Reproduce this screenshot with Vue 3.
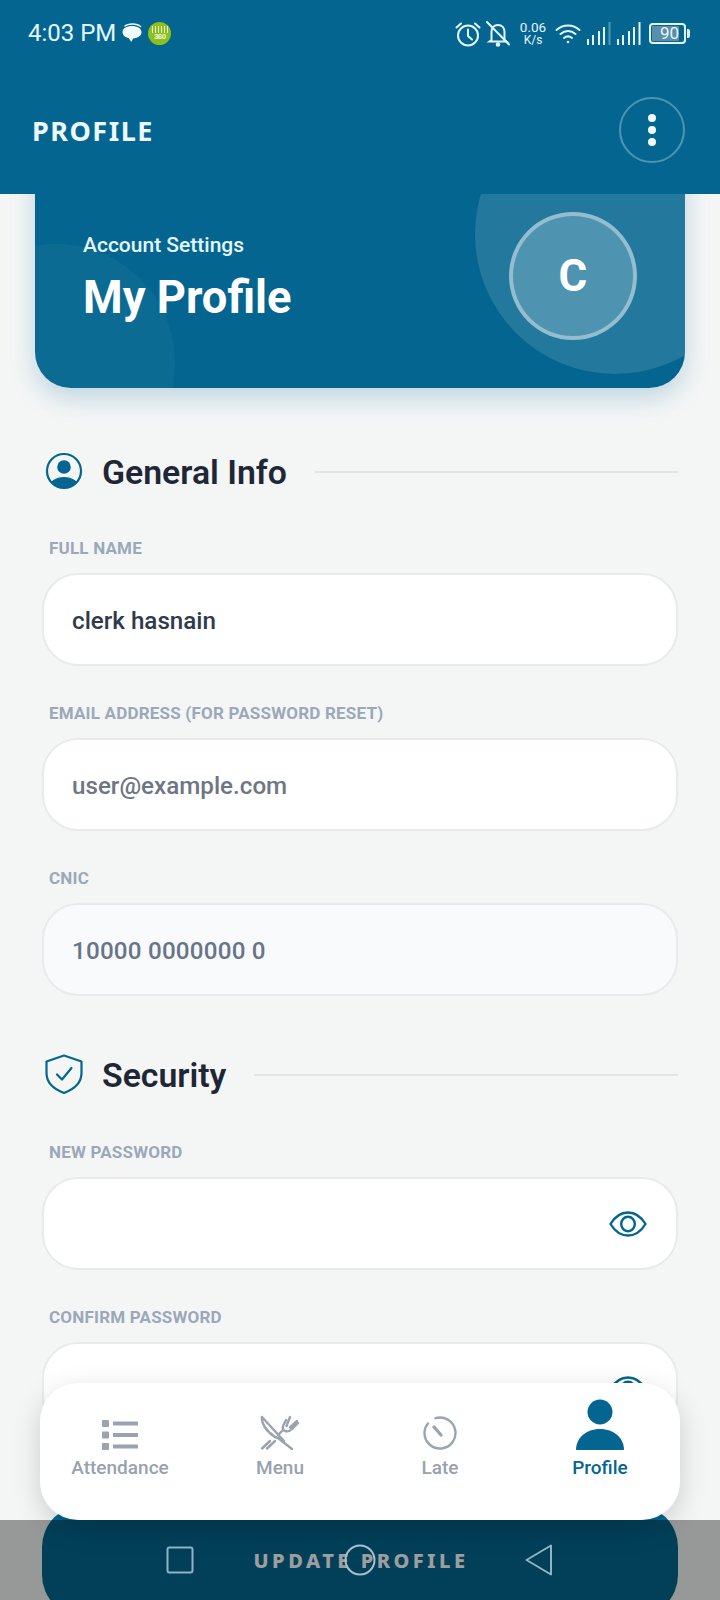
<script setup>
const fields1 = [
  { label: 'FULL NAME', value: 'clerk hasnain', kind: 'filled' },
  { label: 'EMAIL ADDRESS (FOR PASSWORD RESET)', value: 'user@example.com', kind: 'hint' },
  { label: 'CNIC', value: '10000 0000000 0', kind: 'locked' }
]
const fields2 = [
  { label: 'NEW PASSWORD' },
  { label: 'CONFIRM PASSWORD' }
]
</script>

<template>
  <div class="screen">
    <header class="top">
      <div class="status">
        <div class="status-left">
          <span class="clock">4:03 PM</span>
          <svg class="bubble" width="22" height="20" viewBox="0 0 21 20">
            <path d="M10.500 3C5 3 1 5.500 1 9s3 5.500 6 6l3 4 1.500-3.600C16.500 15 20 12.800 20 9.200 20 5.500 16 3 10.500 3z" fill="#f2fbff"/>
            <path d="M3 3.500C5 1.500 8 1 11 1c3.500 0 6.500 .8 8.500 3" fill="none" stroke="#f2fbff" stroke-width="1.300"/>
          </svg>
          <span class="green">
            <span class="green-lines"></span>
            <span class="green-num">360</span>
          </span>
        </div>
        <div class="status-right">
          <svg class="alarm" width="26" height="26" viewBox="0 0 26 26" fill="none" stroke="#e4f6fd" stroke-width="2">
            <circle cx="13" cy="14.500" r="10"/>
            <path d="M13 8.500v6.500l4 3.500M1.500 6.500 6 2.500M24.500 6.500 20 2.500" stroke-linecap="round"/>
          </svg>
          <svg class="bell" width="24" height="26" viewBox="0 0 24 26" fill="none" stroke="#e4f6fd" stroke-width="2">
            <path d="M5.500 19V11c0-4 2.500-7 6.500-7s6.500 3 6.500 7v8l2 1.500H3.500z"/>
            <path d="M1 1l22 22.500" stroke-linecap="round"/>
            <circle cx="12" cy="23.500" r="1.300" fill="#e4f6fd"/>
          </svg>
          <div class="speed"><span>0.06</span><span class="unit">K/s</span></div>
          <svg class="wifi" width="26" height="22" viewBox="0 0 26 22" fill="none" stroke="#e4f6fd" stroke-width="2" stroke-linecap="round">
            <path d="M1.500 7C8 1 18 1 24.500 7M5.500 11c4.500-4 10.500-4 15 0M9 15c2.500-2 5.500-2 8 0"/>
            <circle cx="13" cy="19" r="1.300" fill="#e4f6fd" stroke="none"/>
          </svg>
          <svg class="bars-a" width="25" height="23" viewBox="0 0 25 23" fill="#e4f6fd">
            <rect x="0" y="17" width="2" height="6"/><rect x="5" y="13" width="2" height="10"/>
            <rect x="11" y="9" width="2" height="14"/><rect x="16" y="5" width="2" height="18"/>
            <rect x="21.500" y="0" width="2" height="23" opacity=".35"/>
          </svg>
          <svg class="bars-b" width="25" height="23" viewBox="0 0 25 23" fill="#e4f6fd">
            <rect x="0" y="17" width="2" height="6"/><rect x="5" y="13" width="2" height="10"/>
            <rect x="11" y="9" width="2" height="14"/><rect x="16" y="5" width="2" height="18"/>
            <rect x="21.500" y="0" width="2" height="23"/>
          </svg>
          <div class="battery">
            <span class="battery-body"><span class="battery-num">90</span></span>
            <span class="battery-tip"></span>
          </div>
        </div>
      </div>
      <div class="bar">
        <h1 class="bar-title">PROFILE</h1>
        <button class="more"><i></i><i></i><i></i></button>
      </div>
    </header>

    <section class="hero">
      <span class="blob-right"></span>
      <span class="blob-left"></span>
      <div class="hero-text">
        <p class="hero-sub">Account Settings</p>
        <h2 class="hero-title">My Profile</h2>
      </div>
      <div class="avatar">C</div>
    </section>

    <main class="form">
      <div class="section-head">
        <svg class="section-icon" width="40" height="40" viewBox="0 0 40 40">
          <defs>
            <clipPath id="ring"><circle cx="20" cy="20" r="17"/></clipPath>
          </defs>
          <circle cx="20" cy="16" r="6.800" fill="#046690"/>
          <g clip-path="url(#ring)"><ellipse cx="20" cy="36" rx="15" ry="10" fill="#046690"/></g>
          <circle cx="20" cy="20" r="17" fill="none" stroke="#046690" stroke-width="2.200"/>
        </svg>
        <h3 class="section-title">General Info</h3>
        <span class="rule"></span>
      </div>
      <div v-for="f in fields1" :key="f.label" class="field">
        <label class="field-label">{{ f.label }}</label>
        <div class="input" :class="f.kind">{{ f.value }}</div>
      </div>

      <div class="section-head security">
        <svg class="section-icon" width="40" height="40" viewBox="0 0 40 40" fill="none" stroke="#046690" stroke-width="2.200" stroke-linejoin="round" stroke-linecap="round">
          <path d="M20 1.500 37.500 7.500V19c0 9-7 16-17.500 20C9.500 35 2.500 28 2.500 19V7.500z"/>
          <path d="M13 20.500l5 5 9.500-11.500"/>
        </svg>
        <h3 class="section-title">Security</h3>
        <span class="rule"></span>
      </div>
      <div v-for="f in fields2" :key="f.label" class="field">
        <label class="field-label">{{ f.label }}</label>
        <div class="input pass">
          <svg width="38" height="26" viewBox="0 0 38 26" fill="none" stroke="#046690" stroke-width="2.400">
            <path d="M1.500 13C6 5.500 12 1.500 19 1.500S32 5.500 36.500 13C32 20.500 26 24.500 19 24.500S6 20.500 1.500 13z" stroke-linejoin="round"/>
            <ellipse cx="19" cy="13" rx="6.800" ry="7.200"/>
          </svg>
        </div>
      </div>
    </main>

    <button class="update">UPDATE PROFILE</button>

    <nav class="tabs">
      <div class="tab">
        <span class="tab-icon">
          <svg width="36" height="30" viewBox="0 0 36 30" fill="#9aa3b0">
            <rect x="0" y="0" width="7" height="7" rx="1"/><rect x="11" y="1.500" width="25" height="4"/>
            <rect x="0" y="11.500" width="7" height="7" rx="1"/><rect x="11" y="13" width="25" height="4"/>
            <rect x="0" y="23" width="7" height="7" rx="1"/><rect x="11" y="24.500" width="25" height="4"/>
          </svg>
        </span>
        <span class="tab-label">Attendance</span>
      </div>
      <div class="tab">
        <span class="tab-icon">
          <svg width="40" height="36" viewBox="0 0 40 36" fill="none" stroke="#9aa3b0" stroke-width="2.400" stroke-linecap="round" stroke-linejoin="round">
            <path d="M2 3C1 9 6 17 15 23l3 1 14 11M2 3l22 24"/>
            <path d="M2 34.500l8-7.500M7 34.500l8-7.500M18 21l5-5"/>
            <path d="M26 6l-2.500 5c-1.500 3-.5 5 1.500 6 3 1 5 0 7-2l6-6M30 3l-3.500 9M37 7l-7 6.500"/>
          </svg>
        </span>
        <span class="tab-label">Menu</span>
      </div>
      <div class="tab">
        <span class="tab-icon">
          <svg width="34" height="34" viewBox="0 0 34 34" fill="none" stroke="#9aa3b0" stroke-width="2.400" stroke-linecap="round">
            <path d="M5 7.500C2.800 10 1.500 13.400 1.500 17a15.500 15.500 0 1 0 11-14.800"/>
            <path d="M11 11l7 8" stroke-width="3.400"/>
          </svg>
        </span>
        <span class="tab-label">Late</span>
      </div>
      <div class="tab active">
        <span class="tab-icon">
          <svg width="50" height="51" viewBox="0 0 50 51" fill="#046690">
            <circle cx="25" cy="13" r="12.500"/>
            <path d="M1 51C1 39 11 30 25 30s24 9 24 21z"/>
          </svg>
        </span>
        <span class="tab-label">Profile</span>
      </div>
    </nav>

    <div class="sysnav">
      <svg width="28" height="28" viewBox="0 0 28 28" fill="none" stroke="#8fb4c6" stroke-width="2">
        <rect x="1.500" y="1.500" width="25" height="25" rx="2"/>
      </svg>
      <svg width="32" height="32" viewBox="0 0 32 32" fill="none" stroke="#a9c0cb" stroke-width="2">
        <circle cx="16" cy="16" r="14.500"/>
      </svg>
      <svg width="28" height="32" viewBox="0 0 28 32" fill="none" stroke="#8fb4c6" stroke-width="2" stroke-linejoin="round">
        <path d="M26 1.500V30.500L1.500 16z"/>
      </svg>
    </div>
  </div>
</template>

<style>
html, body { margin: 0; background: #f4f6f6; }
</style>

<style scoped>
.screen {
  position: relative;
  width: 720px;
  height: 1600px;
  overflow: hidden;
  background: #f4f6f6;
  font-family: Roboto, sans-serif;
}
.top {
  position: relative;
  z-index: 2;
  height: 194px;
  background: #046690;
  color: #eef9fe;
}
.status {
  height: 66px;
  padding: 0 30px 0 28px;
  display: flex;
  align-items: center;
  justify-content: space-between;
  box-sizing: border-box;
}
.status-left { display: flex; align-items: center; }
.clock { font-size: 24px; margin-right: 5px; color: #e4f6fd; }
.bubble { margin-right: 5px; }
.green {
  width: 23px;
  height: 23px;
  border-radius: 50%;
  background: #8cbf1f;
  display: flex;
  flex-direction: column;
  align-items: center;
  overflow: hidden;
}
.green-lines {
  width: 16px;
  height: 7px;
  margin-top: 4px;
  background: repeating-linear-gradient(90deg, #e8f5c8 0 1px, transparent 1px 3px);
}
.green-num {
  font: 700 8px/8px "Liberation Sans", sans-serif;
  letter-spacing: -0.5px;
  color: #f2fadf;
}
.status-right { display: flex; align-items: center; color: #e4f6fd; margin-top: 1px; }
.alarm { margin-right: 5px; }
.bell { margin-right: 7px; }
.speed {
  display: flex;
  flex-direction: column;
  align-items: center;
  font-size: 13.500px;
  line-height: 14px;
  width: 32px;
  margin-right: 6px;
}
.unit { font-size: 12px; line-height: 13px; }
.bars-a { margin-left: 6px; }
.bars-b { margin-left: 5px; }
.battery { display: flex; align-items: center; margin-left: 7px; }
.battery-body {
  width: 37px;
  height: 21px;
  box-sizing: border-box;
  border: 2px solid #e4f6fd;
  border-radius: 4px;
  padding: 1px;
  display: flex;
}
.battery-num {
  flex: 0 0 80%;
  background: #5a8eab;
  border-radius: 1px;
  font-size: 17px;
  line-height: 15px;
  text-align: center;
  text-indent: 8px;
  white-space: nowrap;
}
.battery-tip { width: 3px; height: 9px; background: #e4f6fd; border-radius: 0 2px 2px 0; margin-left: 1px; }
.bar {
  height: 128px;
  padding: 0 35px 0 32px;
  display: flex;
  align-items: flex-start;
  justify-content: space-between;
}
.bar-title {
  margin: 46px 0 0;
  font: 700 27px/38px "Noto Sans", sans-serif;
  letter-spacing: 1.500px;
}
.more {
  width: 66px;
  height: 66px;
  margin-top: 31px;
  padding: 0;
  border: 2px solid rgba(255,255,255,.3);
  border-radius: 50%;
  background: transparent;
  display: flex;
  flex-direction: column;
  align-items: center;
  justify-content: center;
  gap: 4px;
}
.more i { width: 8px; height: 8px; border-radius: 50%; background: #f2fbff; }

.hero {
  position: relative;
  z-index: 1;
  height: 228px;
  margin: -34px 35px 0;
  padding: 34px 48px 0;
  box-sizing: border-box;
  border-radius: 0 0 36px 36px;
  background: #046690;
  box-shadow: 0 10px 26px rgba(4,102,144,.22);
  display: flex;
  align-items: flex-start;
  justify-content: space-between;
  overflow: hidden;
}
.blob-right {
  position: absolute;
  left: 440px;
  top: -66px;
  width: 280px;
  height: 280px;
  border-radius: 50%;
  background: rgba(255,255,255,.12);
}
.blob-left {
  position: absolute;
  left: -98px;
  top: 84px;
  width: 238px;
  height: 238px;
  border-radius: 50%;
  background: rgba(255,255,255,.035);
}
.hero-text { position: relative; padding-top: 39px; color: #fff; }
.hero-sub {
  margin: 0;
  font-size: 21px;
  line-height: 24px;
  font-weight: 500;
  color: #e4f6fd;
}
.hero-title {
  margin: 15px 0 0;
  font-size: 45.300px;
  line-height: 52px;
  font-weight: 700;
}
.avatar {
  position: relative;
  width: 128px;
  height: 128px;
  margin: 18px 0 0 0;
  box-sizing: border-box;
  border: 4px solid rgba(255,255,255,.4);
  border-radius: 50%;
  background: rgba(255,255,255,.2);
  color: #fff;
  font-size: 44px;
  font-weight: 700;
  display: flex;
  align-items: center;
  justify-content: center;
}

.form { padding: 65px 42px 0 42px; }
.section-head {
  display: flex;
  align-items: center;
  height: 40px;
  margin-bottom: 43px;
  padding-left: 2px;
}
.section-head.security { margin-top: 60px; margin-bottom: 44px; }
.section-icon { flex: none; margin-right: 18px; margin-top: -4px; }
.section-title {
  margin: -1px 28px 0 0;
  font-size: 33.800px;
  line-height: 40px;
  font-weight: 600;
  color: #1f2737;
  white-space: nowrap;
}
.rule { flex: 1; height: 2px; background: #e1e4e6; margin-top: -3px; }
.field { margin-bottom: 35px; }
.field-label {
  display: block;
  height: 24px;
  margin: 0 0 13px 7px;
  font-size: 17px;
  line-height: 25px;
  letter-spacing: .2px;
  font-weight: 700;
  color: #9ba8ba;
}
.input {
  height: 93px;
  box-sizing: border-box;
  padding: 2px 28px 0;
  border: 2px solid #e8eaeb;
  border-radius: 36px;
  background: #fff;
  display: flex;
  align-items: center;
  font-size: 24.200px;
  font-weight: 500;
}
.filled { color: #2f3a4c; }
.hint { color: #6d7683; }
.locked { color: #66758a; background: #f8fafc; letter-spacing: .2px; }
.pass { justify-content: flex-end; padding: 0 29px 0 0; }

.update {
  position: absolute;
  z-index: 3;
  left: 42px;
  top: 1505px;
  width: 636px;
  height: 112px;
  border: none;
  border-radius: 42px;
  background: #046690;
  color: #fff;
  font: 800 20px/1 "Noto Sans", sans-serif;
  letter-spacing: 3.500px;
  padding: 0 0 0 2px;
}
.tabs {
  position: absolute;
  z-index: 4;
  left: 40px;
  top: 1383px;
  width: 640px;
  height: 137px;
  border-radius: 38px;
  background: #fff;
  box-shadow: 0 8px 28px rgba(0,0,0,.16);
  display: grid;
  grid-template-columns: repeat(4, 1fr);
}
.tab {
  display: flex;
  flex-direction: column;
  align-items: center;
  padding-top: 16px;
  color: #98a2af;
}
.tab-icon {
  height: 51px;
  display: flex;
  align-items: flex-end;
  justify-content: center;
}
.tab-label {
  margin-top: 7px;
  font-size: 19px;
  line-height: 22px;
  font-weight: 500;
}
.tab.active { color: #046690; }
.sysnav {
  position: absolute;
  z-index: 5;
  left: 0;
  top: 1520px;
  width: 720px;
  height: 80px;
  background: rgba(0,0,0,.38);
  box-sizing: border-box;
  padding: 0 167px 0 166px;
  display: flex;
  align-items: center;
  justify-content: space-between;
}
</style>
